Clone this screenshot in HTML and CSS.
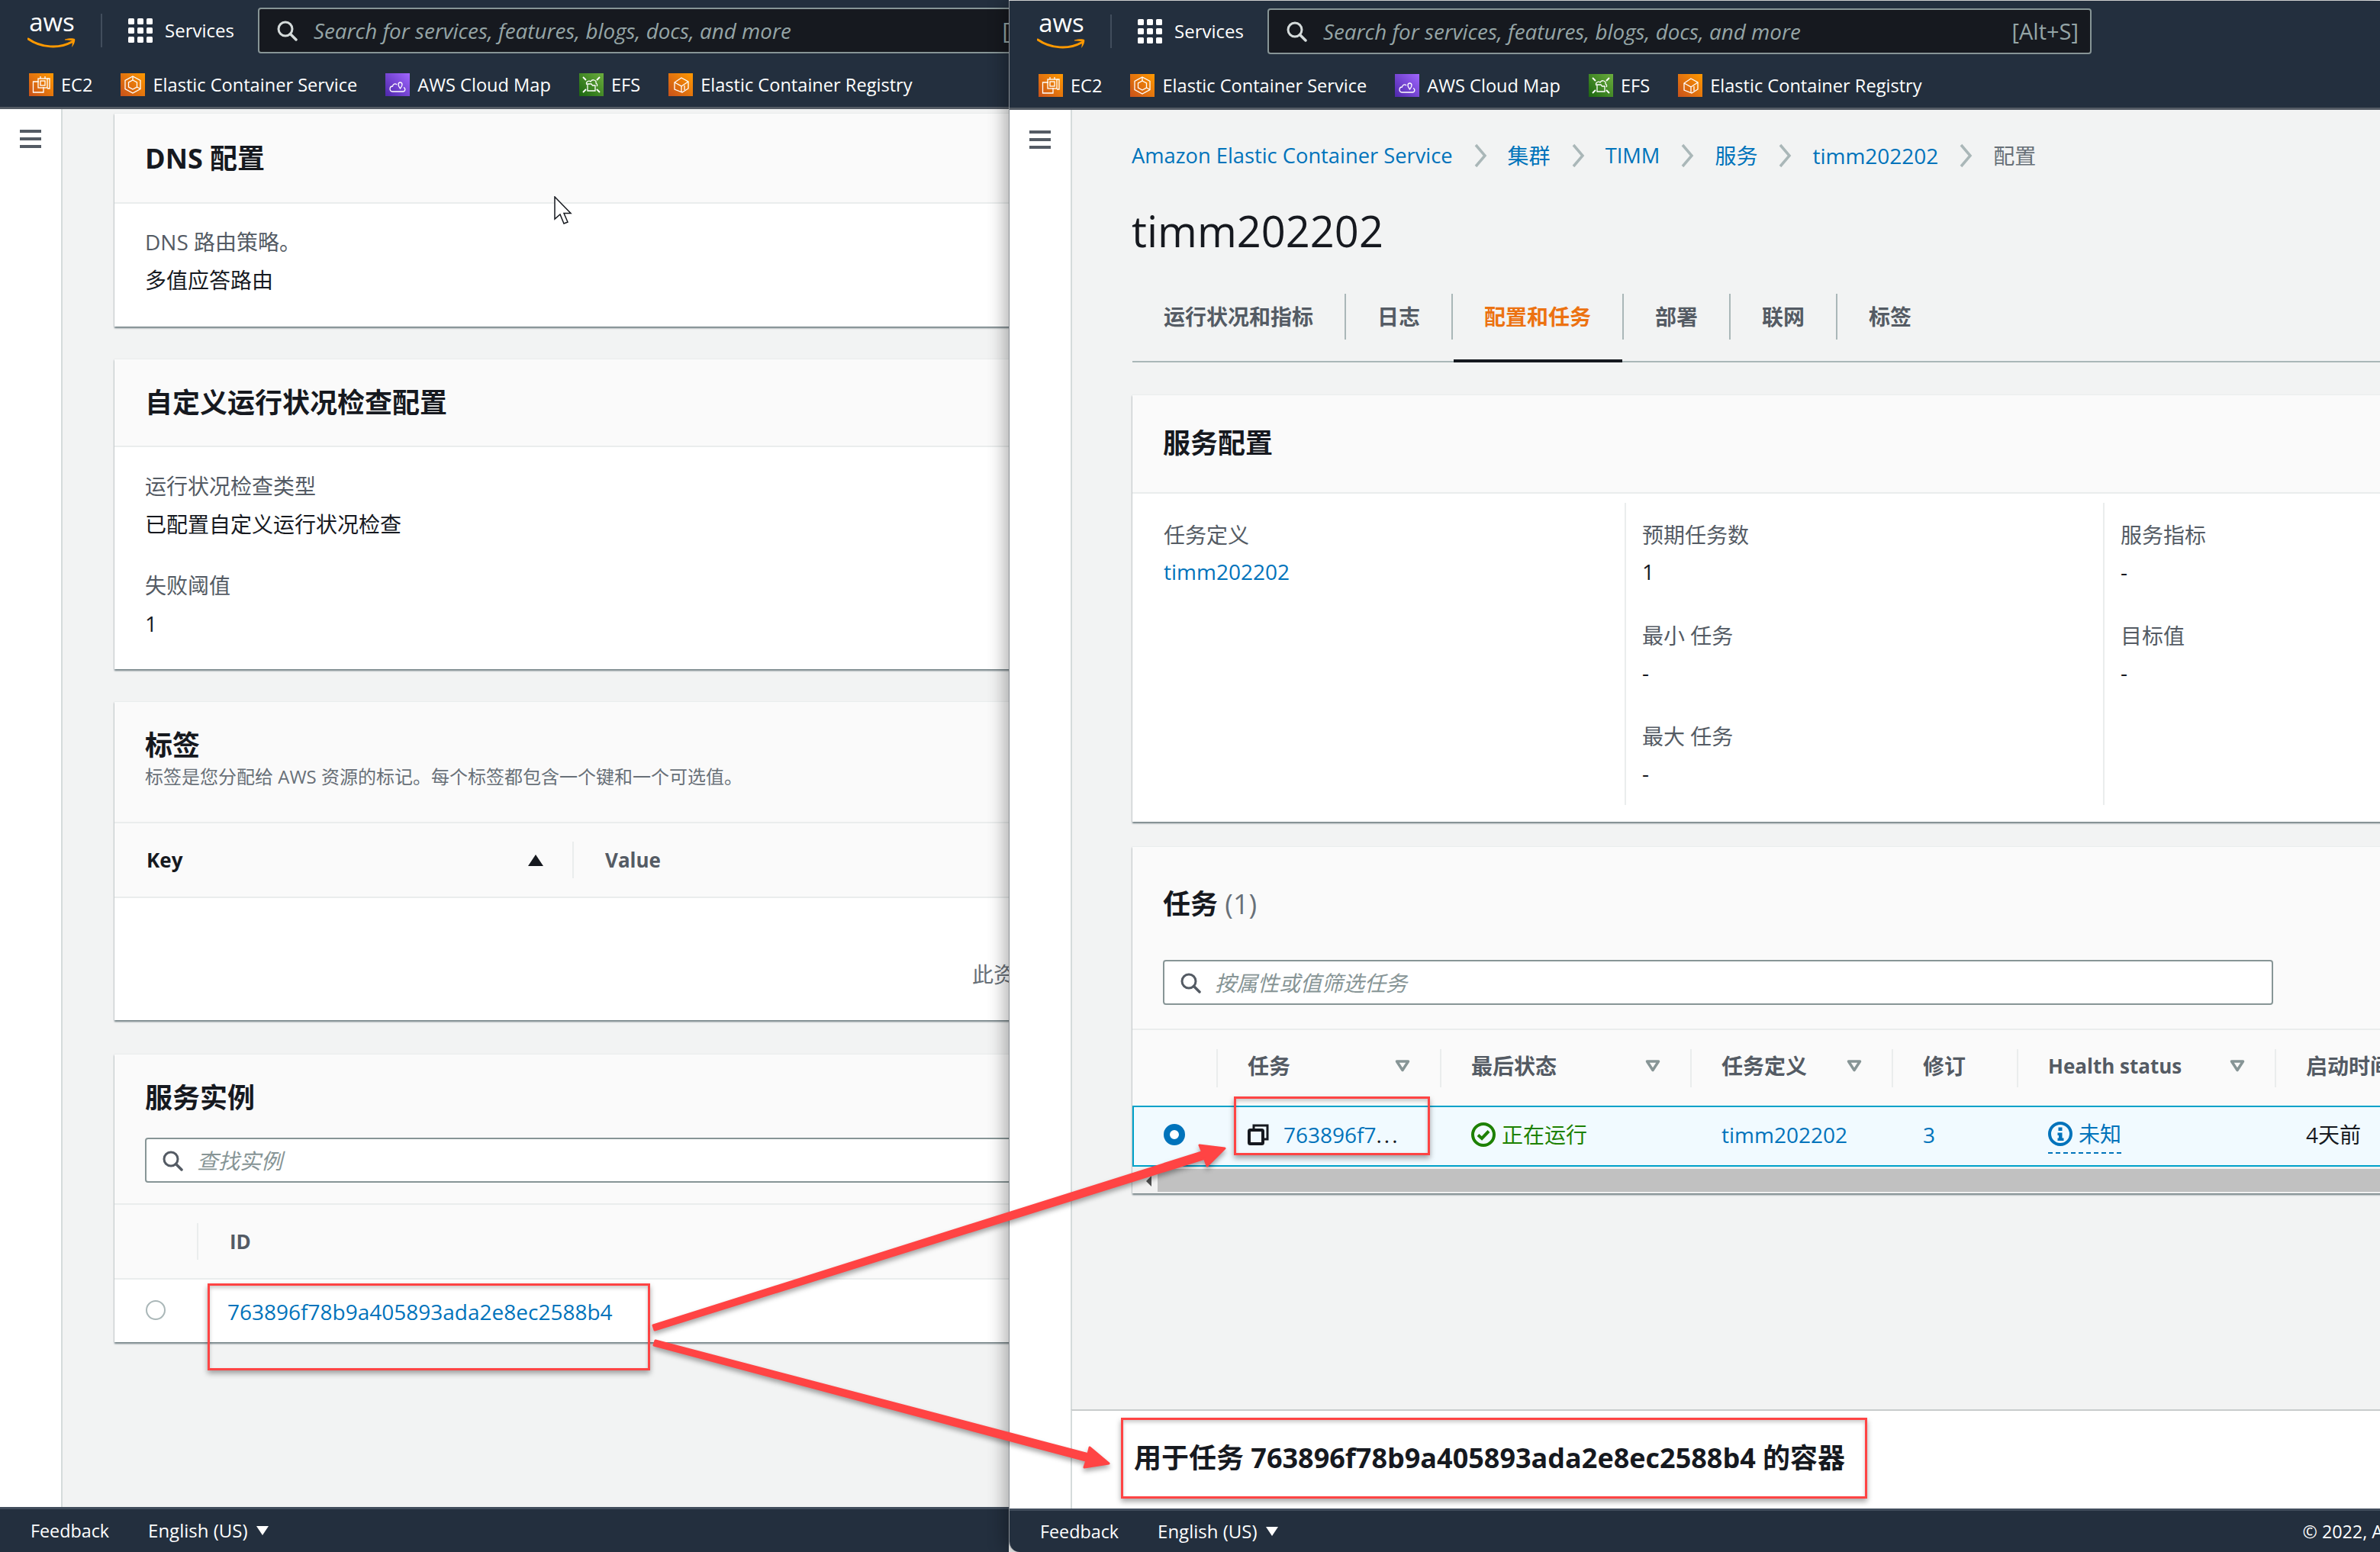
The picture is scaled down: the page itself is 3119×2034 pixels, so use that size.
FILE: index.html
```html
<!DOCTYPE html>
<html lang="zh-CN">

<head>
	<meta charset="UTF-8">
	<title>timm202202 - 配置</title>
	<link rel="stylesheet" href="styles.css">
</head>

<body>
	<svg class="defs" width="0" height="0">
		<symbol id="i-smile" viewBox="0 0 64 16">
			<path d="M1 2C18 14 42 15 58 6" fill="none" stroke="#f90" stroke-width="3" stroke-linecap="round"/>
			<path d="M49 2.500C54 1 60 1 62 2C63 4 61 10 58 13C59 9 59 6 58.500 4.500C56 3.800 53 3.500 49 3.500Z" fill="#f90"/>
		</symbol>
		<symbol id="i-apps" viewBox="0 0 32 32">
			<g fill="#fff">
				<rect width="8" height="8" rx="1.500"/><rect x="12" width="8" height="8" rx="1.500"/><rect x="24" width="8" height="8" rx="1.500"/>
				<rect y="12" width="8" height="8" rx="1.500"/><rect x="12" y="12" width="8" height="8" rx="1.500"/><rect x="24" y="12" width="8" height="8" rx="1.500"/>
				<rect y="24" width="8" height="8" rx="1.500"/><rect x="12" y="24" width="8" height="8" rx="1.500"/><rect x="24" y="24" width="8" height="8" rx="1.500"/>
			</g>
		</symbol>
		<symbol id="i-search" viewBox="0 0 28 28">
			<circle cx="12" cy="12" r="9" fill="none" stroke="currentColor" stroke-width="3"/>
			<path d="M18.500 18.500L26 26" stroke="currentColor" stroke-width="3.500" stroke-linecap="round"/>
		</symbol>
		<symbol id="i-ec2" viewBox="0 0 32 30">
			<g fill="none" stroke="#fff" stroke-width="1.300">
				<path d="M13 11H5.500V25H19V18"/>
				<rect x="12" y="7" width="12" height="12"/>
				<rect x="15" y="10" width="6" height="6"/>
				<path d="M24 7H27V20H24M15 4V7M21 4V7"/>
			</g>
		</symbol>
		<symbol id="i-ecs" viewBox="0 0 32 30">
			<g fill="none" stroke="#fff" stroke-width="1.300">
				<path d="M16 4L26 9.500V20.500L16 26L6 20.500V9.500Z"/>
				<path d="M16 9L21.500 12V18L16 21L10.500 18V12Z"/>
				<path d="M21.500 18L26 20.500M16 4V9"/>
			</g>
		</symbol>
		<symbol id="i-map" viewBox="0 0 32 30">
			<g fill="none" stroke="#fff" stroke-width="1.300">
				<path d="M9 24C5 24 5 17 9.500 17C10 14 13 13 15 15"/>
				<path d="M9 24H23C26 24 27 20 24 18.500"/>
				<path d="M17 15C17 11 22 11 22 15C22 17 19.500 20 19.500 20C19.500 20 17 17 17 15Z"/>
			</g>
		</symbol>
		<symbol id="i-efs" viewBox="0 0 32 30">
			<g fill="none" stroke="#fff" stroke-width="1.300">
				<path d="M10 15C8 11 13 9 15 11C17 7 23 9 22 13C24 14 24 16 23 17"/>
				<path d="M11 14H16L17.500 16H21V23H11Z"/>
				<path d="M5 5L9 9M27 5L23 9M5 25L9 21M27 25L23 21" stroke-width="1.800"/>
			</g>
		</symbol>
		<symbol id="i-ecr" viewBox="0 0 32 30">
			<g fill="none" stroke="#fff" stroke-width="1.300">
				<path d="M17 6L26 11V20L18 25L8 21V12Z"/>
				<path d="M8 12L17 17V25M17 17L26 11"/>
				<path d="M21 16V22"/>
			</g>
		</symbol>
		<symbol id="i-chevron" viewBox="0 0 18 32">
			<path d="M3 2L15 16L3 30" fill="none" stroke="#aab7b8" stroke-width="3.500"/>
		</symbol>
		<symbol id="i-sort" viewBox="0 0 20 16">
			<path d="M2.500 2H17.500L10 13.500Z" fill="none" stroke="#879596" stroke-width="3.500" stroke-linejoin="round"/>
		</symbol>
	</svg>

	<!-- left window -->
	<div class="window window-left">
		<header class="topbar">
			<div class="topbar-row">
				<div class="logo"><span class="logo-text">aws</span><svg class="logo-smile"><use href="#i-smile"/></svg></div>
				<div class="topbar-divider"></div>
				<svg class="apps-icon"><use href="#i-apps"/></svg>
				<span class="services">Services</span>
				<div class="global-search">
					<svg class="global-search-icon"><use href="#i-search"/></svg>
					<span class="global-search-text">Search for services, features, blogs, docs, and more</span>
					<span class="global-search-key">[Alt+S]</span>
				</div>
			</div>
			<nav class="favs">
				<span class="fav"><svg class="fav-icon bg-orange"><use href="#i-ec2"/></svg>EC2</span>
				<span class="fav"><svg class="fav-icon bg-orange"><use href="#i-ecs"/></svg>Elastic Container Service</span>
				<span class="fav"><svg class="fav-icon bg-purple"><use href="#i-map"/></svg>AWS Cloud Map</span>
				<span class="fav"><svg class="fav-icon bg-green"><use href="#i-efs"/></svg>EFS</span>
				<span class="fav"><svg class="fav-icon bg-orange"><use href="#i-ecr"/></svg>Elastic Container Registry</span>
			</nav>
		</header>

		<div class="main">
			<aside class="sidebar"><div class="burger"><i></i><i></i><i></i></div></aside>
			<div class="content content-left">
				<section class="card card-l">
					<div class="card-head head-dns"><h2>DNS 配置</h2></div>
					<div class="card-body body-l">
						<div class="label">DNS 路由策略。</div>
						<div class="value">多值应答路由</div>
					</div>
				</section>

				<section class="card card-l">
					<div class="card-head head-health"><h2>自定义运行状况检查配置</h2></div>
					<div class="card-body body-l body-health">
						<div class="label">运行状况检查类型</div>
						<div class="value">已配置自定义运行状况检查</div>
						<div class="label label-next">失败阈值</div>
						<div class="value">1</div>
					</div>
				</section>

				<section class="card card-l card-tags">
					<div class="card-head head-tags">
						<h2 class="title-tight">标签</h2>
						<p class="card-desc">标签是您分配给 AWS 资源的标记。每个标签都包含一个键和一个可选值。</p>
					</div>
					<div class="tag-thead">
						<div class="tag-key">Key<span class="sort-up"></span></div>
						<div class="tag-value">Value</div>
					</div>
					<div class="card-body tag-empty">此资源没有标签</div>
				</section>

				<section class="card card-l">
					<div class="card-head head-inst">
						<h2>服务实例</h2>
						<div class="filter filter-inst">
							<svg class="filter-icon"><use href="#i-search"/></svg>
							<span>查找实例</span>
						</div>
					</div>
					<div class="inst-thead"><div class="inst-id">ID</div></div>
					<div class="card-body inst-row">
						<span class="radio-off"></span>
						<a class="link inst-link">763896f78b9a405893ada2e8ec2588b4</a>
					</div>
				</section>
			</div>
		</div>

		<footer class="footer">
			<span>Feedback</span>
			<span class="lang">English (US)<i class="lang-caret"></i></span>
		</footer>
	</div>

	<!-- right window -->
	<div class="window window-right">
		<header class="topbar">
			<div class="topbar-row">
				<div class="logo"><span class="logo-text">aws</span><svg class="logo-smile"><use href="#i-smile"/></svg></div>
				<div class="topbar-divider"></div>
				<svg class="apps-icon"><use href="#i-apps"/></svg>
				<span class="services">Services</span>
				<div class="global-search">
					<svg class="global-search-icon"><use href="#i-search"/></svg>
					<span class="global-search-text">Search for services, features, blogs, docs, and more</span>
					<span class="global-search-key">[Alt+S]</span>
				</div>
			</div>
			<nav class="favs">
				<span class="fav"><svg class="fav-icon bg-orange"><use href="#i-ec2"/></svg>EC2</span>
				<span class="fav"><svg class="fav-icon bg-orange"><use href="#i-ecs"/></svg>Elastic Container Service</span>
				<span class="fav"><svg class="fav-icon bg-purple"><use href="#i-map"/></svg>AWS Cloud Map</span>
				<span class="fav"><svg class="fav-icon bg-green"><use href="#i-efs"/></svg>EFS</span>
				<span class="fav"><svg class="fav-icon bg-orange"><use href="#i-ecr"/></svg>Elastic Container Registry</span>
			</nav>
		</header>

		<div class="main">
			<aside class="sidebar"><div class="burger"><i></i><i></i><i></i></div></aside>
			<div class="right-col">
				<div class="content content-right">
					<nav class="crumbs">
						<a class="link crumb-latin">Amazon Elastic Container Service</a>
						<svg class="crumb-sep"><use href="#i-chevron"/></svg>
						<a class="link">集群</a>
						<svg class="crumb-sep"><use href="#i-chevron"/></svg>
						<a class="link crumb-latin">TIMM</a>
						<svg class="crumb-sep"><use href="#i-chevron"/></svg>
						<a class="link">服务</a>
						<svg class="crumb-sep"><use href="#i-chevron"/></svg>
						<a class="link">timm202202</a>
						<svg class="crumb-sep"><use href="#i-chevron"/></svg>
						<span class="crumb-now">配置</span>
					</nav>
					<h1 class="page-title">timm202202</h1>

					<div class="tabs">
						<div class="tab">运行状况和指标</div>
						<div class="tab">日志</div>
						<div class="tab active">配置和任务</div>
						<div class="tab">部署</div>
						<div class="tab">联网</div>
						<div class="tab">标签</div>
					</div>

					<section class="card card-r">
						<div class="card-head head-conf"><h2>服务配置</h2></div>
						<div class="card-body conf-body">
							<div class="conf-col conf-first">
								<div class="kv"><div class="label">任务定义</div><div class="value"><a class="link">timm202202</a></div></div>
							</div>
							<div class="conf-col conf-second">
								<div class="kv"><div class="label">预期任务数</div><div class="value">1</div></div>
								<div class="kv"><div class="label">最小 任务</div><div class="value">-</div></div>
								<div class="kv"><div class="label">最大 任务</div><div class="value">-</div></div>
							</div>
							<div class="conf-col conf-third">
								<div class="kv"><div class="label">服务指标</div><div class="value">-</div></div>
								<div class="kv"><div class="label">目标值</div><div class="value">-</div></div>
							</div>
						</div>
					</section>

					<section class="card card-r card-tasks">
						<div class="card-head head-tasks">
							<h2>任务 <span class="count">(1)</span></h2>
							<div class="filter filter-tasks">
								<svg class="filter-icon"><use href="#i-search"/></svg>
								<span>按属性或值筛选任务</span>
							</div>
						</div>

						<div class="task-grid task-head">
							<div class="th"></div>
							<div class="th">任务<svg class="sort"><use href="#i-sort"/></svg></div>
							<div class="th">最后状态<svg class="sort"><use href="#i-sort"/></svg></div>
							<div class="th">任务定义<svg class="sort"><use href="#i-sort"/></svg></div>
							<div class="th">修订</div>
							<div class="th th-latin">Health status<svg class="sort"><use href="#i-sort"/></svg></div>
							<div class="th th-last">启动时间</div>
						</div>

						<div class="task-grid task-row">
							<div class="td td-radio"><span class="radio-on"></span></div>
							<div class="td">
								<svg class="copy-icon" viewBox="0 0 28 28"><path d="M8 8V2H26V20H20" fill="none" stroke="#16191f" stroke-width="3"/><rect x="2" y="8" width="18" height="18" rx="1.500" fill="none" stroke="#16191f" stroke-width="4"/></svg>
								<a class="link task-id">763896f7</a><span class="ellipsis">...</span>
							</div>
							<div class="td td-ok">
								<svg class="status-icon" viewBox="0 0 32 32"><circle cx="16" cy="16" r="14" fill="none" stroke="#1d8102" stroke-width="4"/><path d="M9 16.500L14 21L23 11.500" fill="none" stroke="#1d8102" stroke-width="4"/></svg>
								正在运行
							</div>
							<div class="td"><a class="link">timm202202</a></div>
							<div class="td"><a class="link">3</a></div>
							<div class="td">
								<span class="health">
									<svg class="status-icon" viewBox="0 0 32 32"><circle cx="16" cy="16" r="14" fill="none" stroke="#0073bb" stroke-width="4"/><path d="M13.500 7.500h5v4.500h-5zM12.500 14.500h6v7h2v3.500h-8v-3.500h1.500v-3.500h-1.500z" fill="#0073bb"/></svg>
									未知
								</span>
							</div>
							<div class="td td-last">4天前</div>
						</div>

						<div class="hscroll"><i class="hscroll-arrow"></i><div class="hscroll-thumb"></div></div>
					</section>
				</div>

				<div class="detail-band"><h2 class="detail-title">用于任务 763896f78b9a405893ada2e8ec2588b4 的容器</h2></div>
			</div>
		</div>

		<footer class="footer">
			<span>Feedback</span>
			<span class="lang">English (US)<i class="lang-caret"></i></span>
			<span class="copyright">© 2022, Amazon Web Services, Inc. or its affiliates.</span>
		</footer>
	</div>

	<!-- annotations drawn on top of the two windows -->
	<svg class="pointer" viewBox="0 0 26 38"><path d="M1 1V30L8 24L13 36L18 34L13 22.500H22Z" fill="#fff" stroke="#16191f" stroke-width="1.500"/></svg>
	<div class="mark mark-id"></div>
	<div class="mark mark-task"></div>
	<div class="mark mark-title"></div>
	<svg class="arrows" viewBox="0 0 3119 2034">
		<polygon points="856,1737 1575.600,1509.700 1572,1501 1605,1505 1582,1528 1578.400,1518.300 858,1743"/>
		<polygon points="859,1757 1426,1905.600 1428,1897 1453,1918 1421,1923 1423.800,1914.400 857,1763"/>
	</svg>
</body>

</html>
```

FILE: styles.css
```css
* {
	box-sizing: border-box;
}

body {
	margin: 0;
	width: 3119px;
	height: 2034px;
	position: relative;
	overflow: hidden;
	background-color: #f2f3f3;
	font-family: "Open Sans", "Noto Sans CJK SC", sans-serif;
	font-size: 28px;
	line-height: 50px;
	color: #16191f;
}

h1,
h2,
p {
	margin: 0;
}

h2 {
	font-size: 36px;
	font-weight: 700;
	line-height: 50px;
}

.defs {
	position: absolute;
}

.link {
	color: #0073bb;
}

/* windows on the desktop */
.window {
	position: absolute;
	top: 0;
	bottom: 0;
	display: flex;
	flex-direction: column;
	overflow: hidden;
	background-color: #f2f3f3;
}

.window-left {
	left: 0;
	width: 1322px;
}

.window-right {
	left: 1322px;
	top: 1px;
	right: 0;
	border-left: 1px solid #8a8f94;
	border-bottom-left-radius: 14px;
	box-shadow: -6px 0 22px rgba(0, 0, 0, 0.3);
}

/* top navigation */
.topbar {
	flex: none;
	height: 143px;
	padding: 10px 0 0;
	background-color: #232f3e;
	border-bottom: 3px solid #545b64;
	color: #fff;
}

.topbar-row {
	display: flex;
	align-items: center;
	height: 60px;
	padding-left: 36px;
}

.logo {
	width: 64px;
	height: 50px;
	position: relative;
	flex: none;
}

.logo-text {
	display: block;
	font-size: 33px;
	line-height: 30px;
	text-align: center;
	margin-top: -1px;
}

.logo-smile {
	position: absolute;
	left: 0;
	top: 34px;
	width: 64px;
	height: 16px;
}

.topbar-divider {
	width: 2px;
	height: 44px;
	margin-left: 32px;
	background-color: #414d5c;
	flex: none;
}

.apps-icon {
	width: 32px;
	height: 32px;
	margin-left: 34px;
	flex: none;
}

.services {
	width: 92px;
	margin-left: 16px;
	font-size: 24px;
	flex: none;
}

.global-search {
	width: 1080px;
	height: 60px;
	margin-left: 30px;
	padding: 0 15px 0 22px;
	display: flex;
	align-items: center;
	flex: none;
	background-color: #16191f;
	border: 2px solid #879596;
	border-radius: 4px;
	color: #95a5a6;
}

.global-search-icon {
	width: 28px;
	height: 28px;
	color: #d5dbdb;
	flex: none;
}

.global-search-text {
	margin-left: 21px;
	font-size: 27.800px;
	font-style: italic;
	white-space: nowrap;
}

.global-search-key {
	margin-left: auto;
	font-size: 29px;
}

.favs {
	display: flex;
	gap: 37px;
	margin-top: 26px;
	padding-left: 38px;
	height: 30px;
	font-size: 23.600px;
	line-height: 28px;
}

.fav {
	display: flex;
	align-items: center;
	white-space: nowrap;
}

.fav-icon {
	width: 32px;
	height: 30px;
	margin-right: 10px;
	flex: none;
}

.bg-orange {
	background: linear-gradient(45deg, #c8511b, #ff9900);
}

.bg-purple {
	background: linear-gradient(45deg, #4d27aa, #a166ff);
}

.bg-green {
	background: linear-gradient(45deg, #1b660f, #6cae3e);
}

/* page frame */
.main {
	flex: 1;
	min-height: 0;
	display: flex;
}

.sidebar {
	flex: none;
	width: 82px;
	background-color: #fff;
	border-right: 2px solid #d5dbdb;
	padding: 27px 0 0 26px;
}

.burger i {
	display: block;
	width: 28px;
	height: 4px;
	margin-bottom: 6px;
	background-color: #545b64;
}

.content {
	flex: 1;
	min-width: 0;
	overflow: hidden;
}

.content-left {
	padding: 5px 0 0 68px;
}

.right-col {
	flex: 1;
	min-width: 0;
	display: flex;
	flex-direction: column;
}

.content-right {
	padding: 40px 0 0 79px;
}

/* cards */
.card {
	border-top: 1px solid #eaeded;
	background-color: #fff;
	box-shadow: 0 2px 2px rgba(0, 28, 36, 0.55);
}

.card-l {
	width: 1400px;
	margin-bottom: 42px;
}

.card-r {
	width: 1800px;
}

.card-tags {
	margin-bottom: 44px;
}

.card-head {
	background-color: #fafafa;
	padding-left: 40px;
	border-bottom: 2px solid #eaeded;
}

.head-dns {
	height: 118px;
	padding-top: 34px;
}

.head-health {
	height: 115px;
	padding-top: 32px;
}

.head-tags {
	height: 159px;
	padding-top: 32px;
}

.head-inst {
	height: 197px;
	padding-top: 32px;
}

.body-l {
	padding: 25px 0 36px 40px;
}

.body-health {
	padding: 26px 0 35px 40px;
}

.label {
	color: #545b64;
}

.label-next {
	margin-top: 30px;
}

.title-tight {
	line-height: 50px;
}

.card-desc {
	font-size: 24px;
	line-height: 38px;
	color: #687078;
	margin-top: -3px;
}

/* tags table */
.tag-thead {
	display: flex;
	height: 98px;
	background-color: #fafafa;
	border-bottom: 2px solid #eaeded;
	font-size: 26px;
	font-weight: 700;
	align-items: center;
}

.tag-key {
	width: 602px;
	height: 48px;
	padding-left: 42px;
	display: flex;
	align-items: center;
	justify-content: space-between;
	padding-right: 38px;
	border-right: 2px solid #eaeded;
}

.tag-value {
	padding-left: 41px;
	color: #545b64;
}

.sort-up {
	width: 0;
	height: 0;
	border-left: 10px solid transparent;
	border-right: 10px solid transparent;
	border-bottom: 15px solid #16191f;
}

.tag-empty {
	height: 160px;
	padding: 75px 0 0 1124px;
	color: #687078;
	white-space: nowrap;
}

/* instances table */
.inst-thead {
	height: 98px;
	padding-left: 108px;
	display: flex;
	align-items: center;
	background-color: #fafafa;
	border-bottom: 2px solid #eaeded;
	font-size: 26px;
	font-weight: 700;
	color: #545b64;
}

.inst-id {
	height: 48px;
	line-height: 48px;
	border-left: 2px solid #eaeded;
	padding-left: 41px;
}

.inst-row {
	height: 82px;
	display: flex;
	align-items: center;
	padding: 2px 0 0 41px;
}

.radio-off {
	width: 26px;
	height: 26px;
	margin-top: -4px;
	border: 2px solid #aab7b8;
	border-radius: 50%;
	background-color: #fff;
	flex: none;
}

.inst-link {
	margin-left: 81px;
}

/* filter inputs */
.filter {
	display: flex;
	align-items: center;
	height: 59px;
	background-color: #fff;
	border: 2px solid #879596;
	border-radius: 4px;
	font-style: italic;
	color: #879596;
}

.filter-icon {
	width: 28px;
	height: 28px;
	color: #545b64;
	margin: 0 18px 0 20px;
	flex: none;
}

.filter-inst {
	width: 1300px;
	margin-top: 27px;
}

.filter-tasks {
	width: 1455px;
	margin-top: 48px;
}

/* breadcrumb, title and tabs */
.crumbs {
	display: flex;
	align-items: center;
	height: 40px;
	line-height: 40px;
	white-space: nowrap;
	margin-left: -1px;
}

.crumb-latin {
	font-size: 27.300px;
}

.crumb-sep {
	width: 18px;
	height: 32px;
	margin: 0 27px;
	flex: none;
}

.crumb-now {
	color: #687078;
}

.page-title {
	margin-top: 42px;
	margin-left: -1px;
	font-size: 56px;
	font-weight: 400;
	line-height: 72px;
}

.tabs {
	display: flex;
	margin: 47px 0 42px;
	padding-bottom: 28px;
	border-bottom: 2px solid #aab7b8;
}

.tab {
	height: 60px;
	line-height: 60px;
	padding: 0 41px;
	border-right: 2px solid #aab7b8;
	font-weight: 700;
	color: #545b64;
	position: relative;
}

.tab:last-child {
	border-right: none;
}

.tab.active {
	color: #ec7211;
}

.tab.active::after {
	content: "";
	position: absolute;
	left: 1px;
	right: 0;
	top: 86px;
	height: 4px;
	background-color: #16191f;
}

/* service configuration */
.head-conf {
	height: 129px;
	padding-top: 38px;
}

.conf-body {
	display: flex;
	padding: 12px 0 22px;
}

.conf-col {
	height: 396px;
	padding-top: 17px;
}

.conf-first {
	width: 647px;
	padding-left: 41px;
	border-right: 2px solid #eaeded;
}

.conf-second {
	width: 627px;
	padding-left: 21px;
	border-right: 2px solid #eaeded;
}

.conf-third {
	padding-left: 21px;
}

.kv {
	margin-bottom: 34px;
}

.kv .value {
	margin-top: -2px;
}

/* tasks table */
.card-tasks {
	margin-top: 32px;
	background-color: #fafafa;
}

.head-tasks {
	height: 240px;
	padding-top: 50px;
}

.count {
	font-weight: 400;
	color: #687078;
}

.task-grid {
	display: grid;
	grid-template-columns: 110px 293px 328px 264px 164px 338px 302px;
}

.task-head {
	height: 99px;
	align-items: center;
}

.th {
	height: 50px;
	padding: 0 39px 5px;
	border-left: 2px solid #eaeded;
	display: flex;
	align-items: center;
	justify-content: space-between;
	font-size: 28px;
	font-weight: 700;
	color: #545b64;
	white-space: nowrap;
}

.th:first-child {
	border-left: none;
}

.th-latin {
	font-size: 26px;
}

.th-last {
	overflow: hidden;
}

.sort {
	width: 20px;
	height: 16px;
	flex: none;
}

.task-row {
	height: 80px;
	background-color: #f1faff;
	border: 2px solid #00a1c9;
	border-right: none;
}

.td {
	display: flex;
	align-items: center;
	padding-left: 39px;
	white-space: nowrap;
	margin-top: -5px;
}

.td-radio {
	padding-left: 39px;
}

.radio-on {
	width: 28px;
	height: 28px;
	border: 8px solid #0073bb;
	border-radius: 50%;
	background-color: #fff;
}

.copy-icon {
	width: 28px;
	height: 28px;
	flex: none;
}

.task-id {
	margin-left: 19px;
}

.ellipsis {
	color: #16191f;
	letter-spacing: 3px;
}

.td-ok {
	color: #1d8102;
}

.status-icon {
	width: 32px;
	height: 32px;
	margin-right: 8px;
	flex: none;
}

.health {
	display: flex;
	align-items: center;
	height: 50px;
	color: #0073bb;
	border-bottom: 2px dashed #0073bb;
}

.hscroll {
	height: 35px;
	padding: 3px 0 2px 0;
	background-color: #f1f1f1;
	display: flex;
	align-items: stretch;
	position: relative;
}

.hscroll-arrow {
	width: 0;
	height: 0;
	margin: 9px 0 0 18px;
	border-top: 7px solid transparent;
	border-bottom: 7px solid transparent;
	border-right: 7px solid #505050;
}

.hscroll-thumb {
	flex: 1;
	margin-left: 8px;
	background-color: #c1c1c1;
}

/* band at the bottom of the right window */
.detail-band {
	flex: none;
	height: 130px;
	padding: 37px 0 0 81px;
	background-color: #fff;
	border-top: 2px solid #c8cccc;
	margin-left: -2px;
	border-left: 2px solid #d5dbdb;
}

.detail-title {
	white-space: nowrap;
}

/* footer */
.footer {
	flex: none;
	height: 59px;
	display: flex;
	align-items: center;
	padding-left: 40px;
	background-color: #232f3e;
	border-top: 3px solid #414d5c;
	color: #fff;
	font-size: 23.300px;
	white-space: nowrap;
}

.window-right .footer {
	height: 57px;
}

.lang {
	margin-left: 51px;
	display: flex;
	align-items: center;
	font-size: 24px;
}

.lang-caret {
	width: 0;
	height: 0;
	margin-left: 12px;
	border-left: 8px solid transparent;
	border-right: 8px solid transparent;
	border-top: 12px solid #fff;
}

.copyright {
	margin-left: 1342px;
}

/* annotations */
.pointer {
	position: absolute;
	left: 726px;
	top: 257px;
	width: 26px;
	height: 38px;
}

.mark {
	position: absolute;
	border: 3px solid #ff4444;
	box-shadow: 0 4px 7px rgba(0, 0, 0, 0.35), inset 0 3px 5px rgba(0, 0, 0, 0.2);
}

.mark-id {
	left: 272px;
	top: 1682px;
	width: 580px;
	height: 114px;
}

.mark-task {
	left: 1617px;
	top: 1437px;
	width: 257px;
	height: 77px;
}

.mark-title {
	left: 1469px;
	top: 1858px;
	width: 978px;
	height: 106px;
}

.arrows {
	position: absolute;
	left: 0;
	top: 0;
	width: 3119px;
	height: 2034px;
	fill: #ff4444;
	stroke: #ff4444;
	stroke-width: 3;
	stroke-linejoin: round;
	filter: drop-shadow(0 4px 3px rgba(0, 0, 0, 0.35));
	pointer-events: none;
}
```
